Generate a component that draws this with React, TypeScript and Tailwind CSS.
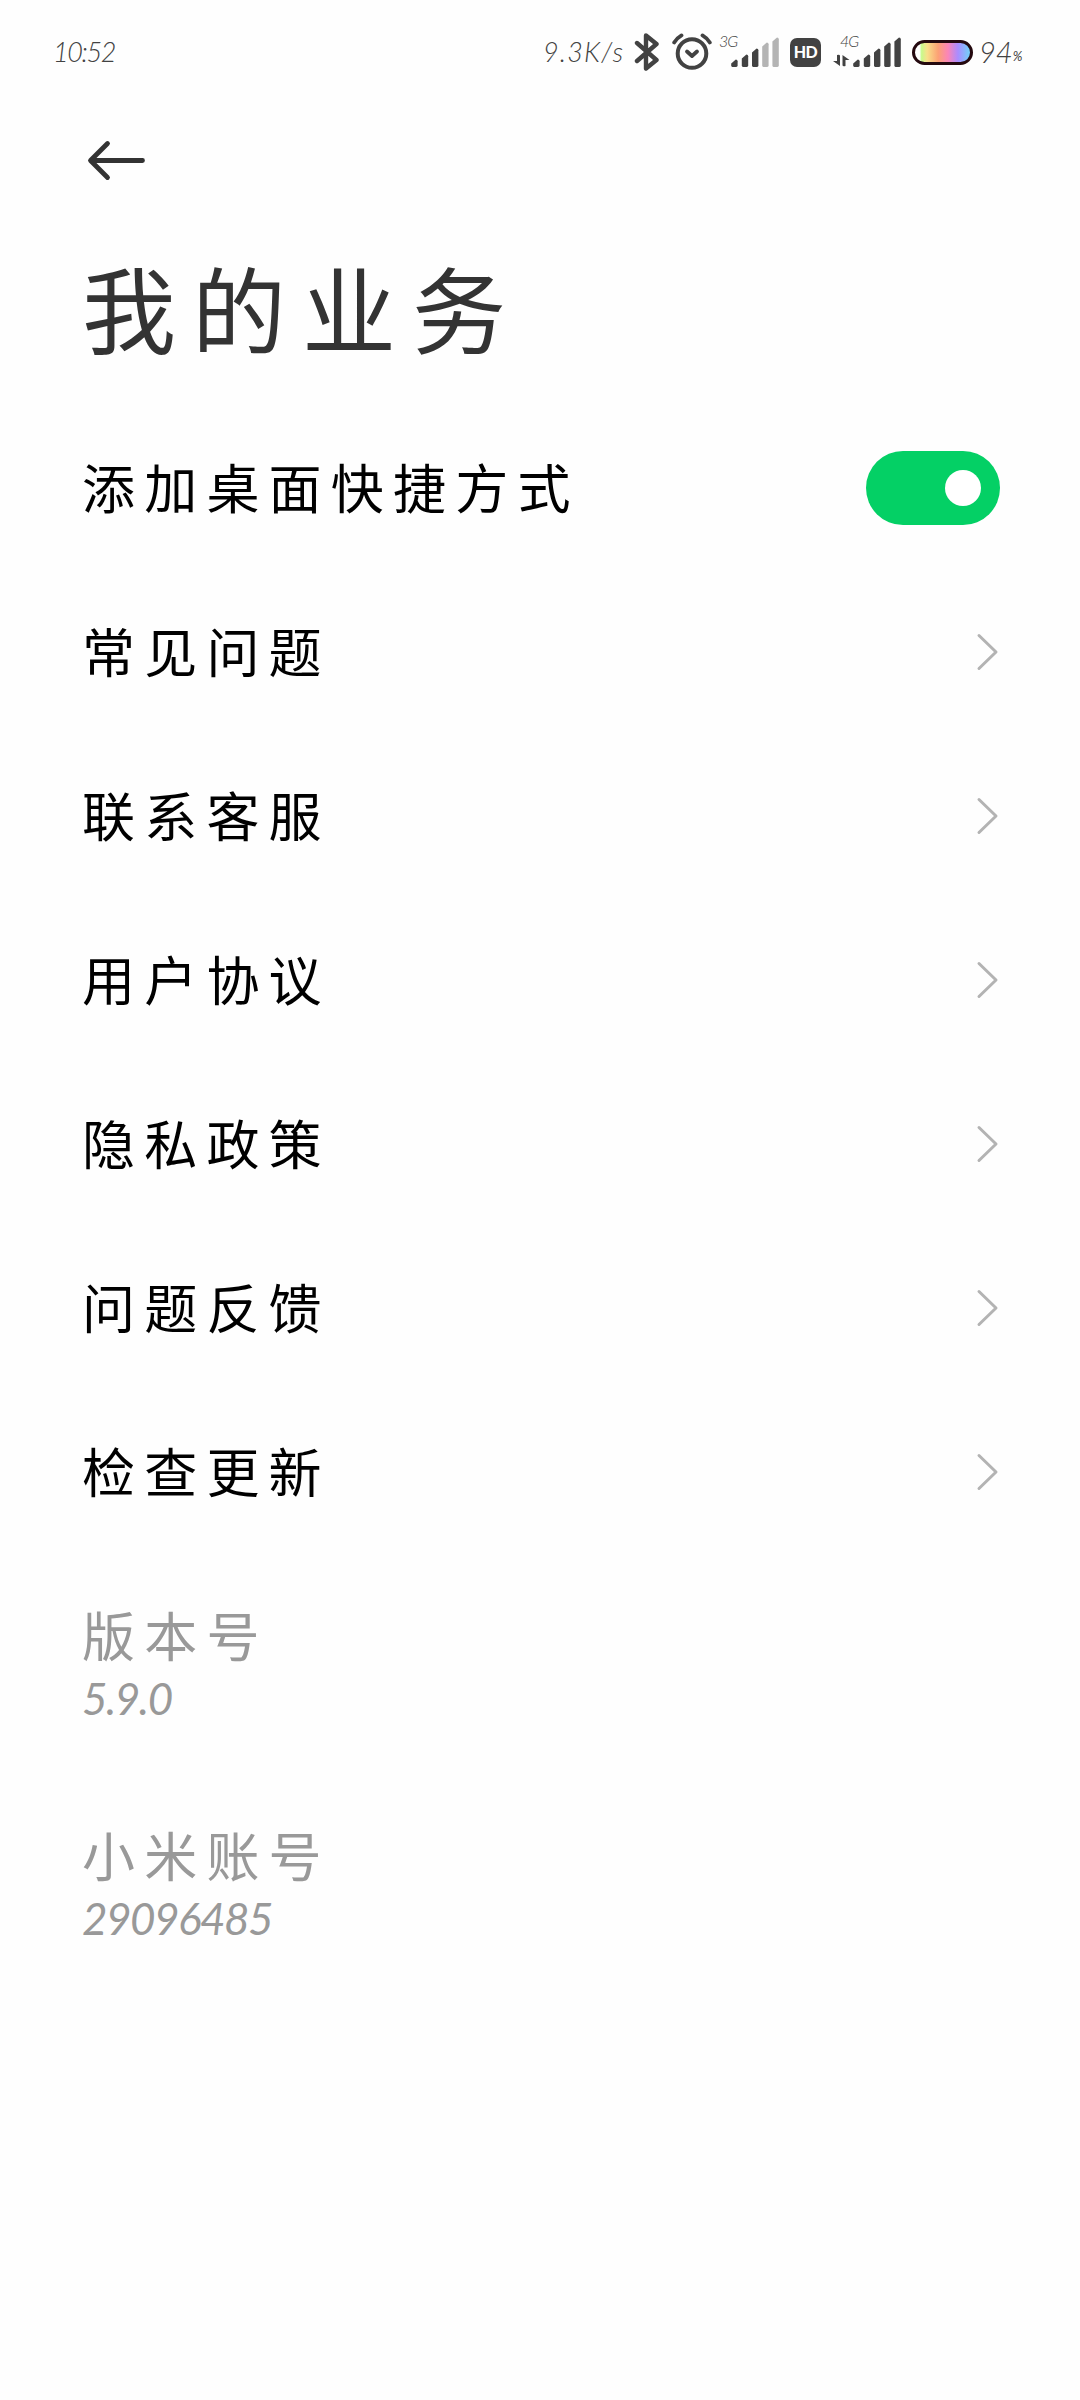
import React from "react";

const menuItems = ["常见问题", "联系客服", "用户协议", "隐私政策", "问题反馈", "检查更新"];

const infoItems = [
  { label: "版本号", value: "5.9.0" },
  { label: "小米账号", value: "29096485" },
];

function SignalBars({ active }: { active: number }) {
  const heights = [8, 13, 19, 25, 30];

  return (
    <svg width="48" height="32" viewBox="0 0 48 32">
      {heights.map((h, i) => {
        const x = i * 10.2 + (i === 0 ? 0.2 : 0.6);
        return (
          <path
            key={h}
            d={`M${x} ${32 - h + 3.5} L${x + 4.6} ${32 - h - 0.6} Q${x + 6.4} ${32 - h - 0.6} ${x + 6.4} ${32 - h + 1.2} V29.6 Q${x + 6.4} 31 ${x + 5} 31 H${x + 1.2} Q${x} 31 ${x} 29.6 Z`}
            fill={i < active ? "#424242" : "#b4b4b4"}
          />
        );
      })}
    </svg>
  );
}

function BluetoothIcon() {
  return (
    <svg className="ml-[9px]" width="26" height="40" viewBox="0 0 26 40" fill="none">
      <path
        d="M3 11 L22.5 28 L12 36.5 V3.5 L22.5 12 L3 29"
        stroke="#424242"
        strokeWidth="4.4"
        strokeLinecap="round"
        strokeLinejoin="round"
      />
    </svg>
  );
}

function AlarmIcon() {
  return (
    <svg className="ml-3" width="40" height="40" viewBox="0 0 40 40" fill="none" stroke="#424242" strokeLinecap="round">
      <circle cx="20" cy="21.5" r="14.3" strokeWidth="4" />
      <path d="M15 19.5 L20 24 L25 19.5" strokeWidth="3.8" strokeLinejoin="round" />
      <path d="M2.2 10.5 Q5 6 9.5 3.4 M37.8 10.5 Q35 6 30.5 3.4" strokeWidth="3.8" />
    </svg>
  );
}

function StatusBar() {
  return (
    <div className="flex h-[104px] items-center pl-[53px] text-[#424242]">
      <span className="w-[490px] text-[27px] font-light italic tracking-[-1.4px]">10:52</span>
      <span className="w-[82px] whitespace-nowrap text-[27px] font-light italic tracking-[1.2px]">9.3K/s</span>
      <BluetoothIcon />
      <AlarmIcon />

      {/* SIM 1 */}
      <div className="relative ml-[7px] flex w-[60px] justify-end">
        <span className="absolute -top-[3px] left-0 text-[16px] leading-4 font-light italic tracking-[-1px]">3G</span>
        <SignalBars active={3} />
      </div>

      <div className="ml-[11px] flex h-[29px] w-[31px] items-center justify-center rounded-[7px] bg-[#424242] text-[16px] font-black tracking-[-0.5px] text-white">
        HD
      </div>

      {/* SIM 2 */}
      <div className="relative ml-3 flex w-[68px] items-end justify-between">
        <span className="absolute -top-[3px] left-[7px] text-[16px] leading-4 font-light italic tracking-[-1px]">4G</span>
        <svg width="17" height="14" viewBox="0 0 17 14" fill="#424242">
          <path d="M4 1 Q7 0 7 2 V12 L0 7 H4 Z" />
          <path d="M12.5 12 Q9.5 13 9.5 11 V1 L16.5 6 H12.5 Z" />
        </svg>
        <SignalBars active={5} />
      </div>

      <div className="ml-[11px] h-[25px] w-[61px] rounded-full border-3 border-[#24090f] bg-[linear-gradient(90deg,#fff_0%,#fff_8%,#c8fa8c_12%,#f8e08a_22%,#fca174_42%,#fb85b8_60%,#aa8cff_78%,#79c9fa_97%)]" />
      <span className="ml-[6px] text-[29px] font-light italic">94</span>
      <span className="mt-[10px] text-[13px] font-normal italic">%</span>
    </div>
  );
}

function Chevron() {
  return (
    <svg width="24" height="40" viewBox="0 0 24 40" fill="none">
      <path d="M3 3.5 L20 20 L3 36.5" stroke="#b3b3b3" strokeWidth="3" strokeLinecap="round" strokeLinejoin="round" />
    </svg>
  );
}

function Row({ label, children }: { label: string; children: React.ReactNode }) {
  return (
    <div className="flex h-[164px] items-center justify-between pr-20 pl-[82px]">
      <span className="text-[53px] leading-none font-normal tracking-[9.2px] text-black">{label}</span>
      {children}
    </div>
  );
}

export default function App() {
  return (
    <div className="h-[2400px] w-[1080px] overflow-hidden bg-[#fefefe] font-[Lato,'Noto_Sans_CJK_SC',sans-serif]">
      <StatusBar />

      <div className="flex h-28 items-center pl-[86px]">
        <svg width="62" height="44" viewBox="0 0 62 44" fill="none">
          <path
            d="M21.5 5.5 L4.5 22.5 L21.5 39.5 M5 22.5 H56.5"
            stroke="#333"
            strokeWidth="4.8"
            strokeLinecap="round"
            strokeLinejoin="round"
          />
        </svg>
      </div>

      <h1 className="flex h-[190px] items-center pl-[82px] text-[94px] leading-none font-normal tracking-[16px] text-[#333]">
        我的业务
      </h1>

      <Row label="添加桌面快捷方式">
        <div className="flex h-[74px] w-[134px] items-center justify-end rounded-full bg-[#04d065] pr-[19px]">
          <div className="size-9 rounded-full bg-white" />
        </div>
      </Row>

      {menuItems.map((item) => (
        <Row key={item} label={item}>
          <Chevron />
        </Row>
      ))}

      {/* Read-only info */}
      <div className="flex flex-col gap-[94px] pt-14 pl-[82px] text-[#999]">
        {infoItems.map(({ label, value }) => (
          <div key={label} className="h-[126px]">
            <div className="h-[61px] text-[53px] leading-[54px] tracking-[9.2px]">{label}</div>
            <div className="text-[44px] leading-[54px] tracking-[-1.5px] italic">{value}</div>
          </div>
        ))}
      </div>
    </div>
  );
}
